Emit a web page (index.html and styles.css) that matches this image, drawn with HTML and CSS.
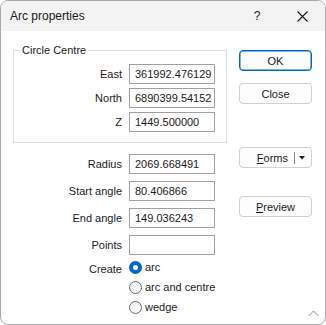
FILE: index.html
```html
<!DOCTYPE html>
<html>
<head>
<meta charset="utf-8">
<link rel="stylesheet" href="styles.css">
</head>
<body>
<div class="window">
  <div class="titlebar">
    <span class="title">Arc properties</span>
    <span class="help">?</span>
    <span class="xbtn"><svg width="11" height="11" viewBox="0 0 11 11"><path d="M0.5 0.5L10.5 10.5M10.5 0.5L0.5 10.5" stroke="#1a1a1a" stroke-width="1.1" fill="none"/></svg></span>
  </div>
  <div class="body">
    <div class="left">
      <fieldset class="group">
        <legend>Circle Centre</legend>
        <div class="grid top">
          <span class="lbl">East</span><div class="input">361992.476129</div>
          <span class="lbl">North</span><div class="input">6890399.54152</div>
          <span class="lbl">Z</span><div class="input">1449.500000</div>
        </div>
      </fieldset>
      <div class="grid lower">
        <span class="lbl">Radius</span><div class="input">2069.668491</div>
        <span class="lbl">Start angle</span><div class="input">80.406866</div>
        <span class="lbl">End angle</span><div class="input">149.036243</div>
        <span class="lbl">Points</span><div class="input"></div>
      </div>
      <div class="grid create">
        <span class="lbl create-lbl">Create</span>
        <div class="radios">
          <div class="radio-row"><span class="radio on"></span><span>arc</span></div>
          <div class="radio-row"><span class="radio"></span><span>arc and centre</span></div>
          <div class="radio-row"><span class="radio"></span><span>wedge</span></div>
        </div>
      </div>
    </div>
    <div class="right">
      <div class="btn ok">OK</div>
      <div class="btn close">Close</div>
      <div class="btn forms"><span class="forms-text"><u>F</u>orms</span><span class="sep"></span><svg class="caret" width="6" height="4" viewBox="0 0 6 4"><path d="M0 0H6L3 3.5Z" fill="#1a1a1a"/></svg></div>
      <div class="btn preview"><u>P</u>review</div>
    </div>
  </div>
  <svg class="grip" width="11" height="7" viewBox="0 0 11 7"><path d="M0.5 6L5.5 1L10.5 6" stroke="#8a8a8a" stroke-width="1" fill="none"/></svg>
</div>
</body>
</html>
```

FILE: styles.css
```css
html, body {
  margin: 0;
  padding: 0;
  background: #ffffff;
}
body {
  font-family: "Liberation Sans", Arial, sans-serif;
  font-size: 11px;
  color: #1a1a1a;
}
.window {
  position: relative;
  width: 326px;
  height: 325px;
  box-sizing: border-box;
  border: 1px solid #a8a8a8;
  border-radius: 8px;
  overflow: hidden;
  background: #ffffff;
}
.titlebar {
  height: 30px;
  background: #f3f3f3;
  display: flex;
  align-items: center;
}
.title {
  margin-left: 9px;
  font-size: 12px;
  color: #1a1a1a;
  flex: 1;
}
.help {
  font-size: 12px;
  width: 12px;
  margin-right: 34px;
  text-align: center;
}
.xbtn {
  display: flex;
  margin-right: 17px;
}
.body {
  display: flex;
  padding: 11px 0 0 12px;
}
.left {
  width: 214px;
}
.group {
  margin: 0;
  padding: 6px 0 10px 0;
  border: 1px solid #dcdcdc;
  width: 214px;
  box-sizing: border-box;
  min-inline-size: 0;
}
.group legend {
  margin-left: 6px;
  padding: 0 2px;
  font-size: 11px;
  line-height: 16px;
}
.grid {
  display: grid;
  grid-template-columns: 108px 86px;
  column-gap: 7px;
}
.grid.top {
  row-gap: 4px;
  grid-auto-rows: 20px;
}
.grid.lower {
  padding-left: 1px;
  margin-top: 11px;
  row-gap: 7px;
  grid-auto-rows: 20px;
}
.lbl {
  text-align: right;
  align-self: center;
  line-height: 14px;
}
.input {
  box-sizing: border-box;
  border: 1px solid #a0a0a0;
  padding-left: 5px;
  line-height: 18px;
  height: 20px;
  white-space: nowrap;
  overflow: hidden;
}
.grid.create {
  padding-left: 1px;
  margin-top: 2px;
}
.create-lbl {
  align-self: start;
  line-height: 14px;
  margin-top: 5px;
}
.radios {
  display: flex;
  flex-direction: column;
}
.radio-row {
  display: flex;
  align-items: center;
  height: 20px;
  gap: 3px;
  white-space: nowrap;
}
.radio {
  width: 13px;
  height: 13px;
  box-sizing: border-box;
  border-radius: 50%;
  border: 1px solid #6a6a6a;
  background: #f6f6f6;
  flex: none;
}
.radio.on {
  border: 4px solid #0067c0;
  background: #ffffff;
}
.right {
  display: flex;
  flex-direction: column;
  margin-left: 12px;
  margin-top: 8px;
}
.btn {
  width: 73px;
  height: 21px;
  box-sizing: border-box;
  border: 1px solid #d0d0d0;
  border-radius: 4px;
  background: #fdfdfd;
  display: flex;
  align-items: center;
  justify-content: center;
  font-size: 11px;
}
.btn.ok {
  border-color: #0067c0;
  box-shadow: inset 0 0 0 0.5px #0067c0;
}
.btn.close {
  margin-top: 12px;
}
.btn.forms {
  margin-top: 43px;
  justify-content: flex-end;
}
.forms-text {
  margin-right: 6px;
}
.sep {
  width: 1px;
  height: 12px;
  background: #8a8a8a;
}
.caret {
  margin: 1px 6px 0 4px;
}
.btn.preview {
  margin-top: 28px;
}
.grip {
  position: absolute;
  right: 6px;
  bottom: 7px;
}
```
